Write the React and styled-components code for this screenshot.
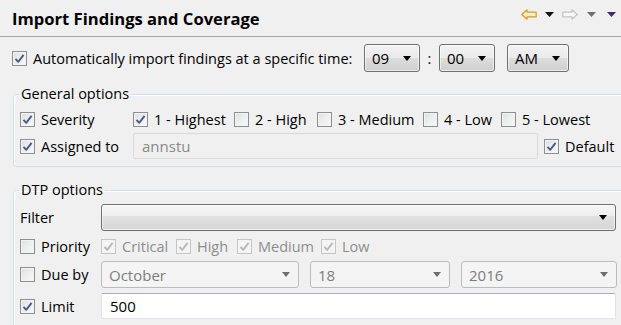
import React from "react";
import styled, { createGlobalStyle } from "styled-components";

const Global = createGlobalStyle`
  html, body { margin: 0; padding: 0; background: #f0f0f0; }
  body { font-family: "Open Sans", "Noto Sans", sans-serif; }
`;

const Root = styled.div`
  width: 621px;
  height: 325px;
  overflow: hidden;
  background: #f0f0f0;
  font-family: "Open Sans", "Noto Sans", sans-serif;
  font-size: 14.5px;
  color: #000;
`;

const Header = styled.header`
  display: flex;
  align-items: center;
  height: 36px;
  padding: 0 3px 0 12px;
  border-bottom: 1px solid #a3a3a3;
`;

const Title = styled.h1`
  flex: 1;
  margin: 0;
  font-size: 16.6px;
  font-weight: 700;
  color: #000;
`;

const NavBar = styled.div`
  display: flex;
  align-items: center;
  margin-top: -8px;
`;

const NavSlot = styled.span`
  display: inline-flex;
  align-items: center;
  justify-content: center;
  width: ${(p) => p.$w}px;
`;

const Content = styled.main`
  padding: 7px 0 0 12px;
`;

const TimeRow = styled.div`
  display: flex;
  align-items: center;
  height: 28px;
`;

const Colon = styled.span`
  width: 19px;
  text-align: center;
`;

const Gap = styled.span`
  width: ${(p) => p.$w}px;
`;

const Group = styled.fieldset`
  margin: ${(p) => p.$mt}px -10px 0 1px;
  padding: 0 5px ${(p) => p.$pb}px 6px;
  border: 1px solid #d5dfe5;
  border-radius: 3px;
  box-shadow: inset 1px 1px 0 #fff;
  min-width: 0;
`;

const Legend = styled.legend`
  padding: 0 2px;
  margin-left: -1px;
  font-size: 14.5px;
  line-height: 20px;
  color: #000;
`;

const Row = styled.div`
  display: flex;
  align-items: center;
  height: ${(p) => p.$h}px;
  margin-top: ${(p) => p.$mt || 0}px;
`;

const Cell = styled.label`
  display: inline-flex;
  align-items: center;
  gap: 6px;
  width: ${(p) => (p.$w ? `${p.$w}px` : "auto")};
  flex: ${(p) => (p.$w ? "none" : "1")};
  white-space: nowrap;
  color: ${(p) => (p.$disabled ? "#8d8d8d" : "#000")};
`;

const Box = styled.span`
  flex: none;
  width: 13px;
  height: 13px;
  border: 1px solid ${(p) => (p.$disabled ? "#c5c5c5" : "#8e8f8f")};
  background: ${(p) =>
    p.$disabled
      ? "#f4f4f4"
      : "linear-gradient(135deg, #dcdde0 0%, #eceded 45%, #f8f8f8 100%)"};
  box-shadow: inset 0 0 0 1px ${(p) => (p.$disabled ? "#f4f4f4" : "#f3f3f3")};
  display: inline-flex;
  align-items: center;
  justify-content: center;
`;

const Select = styled.div`
  box-sizing: border-box;
  display: flex;
  align-items: center;
  width: ${(p) => (p.$w ? `${p.$w}px` : "auto")};
  flex: ${(p) => (p.$w ? "none" : "1")};
  height: ${(p) => p.$h || 28}px;
  padding: 0 8px 0 7px;
  border: 1px solid ${(p) => (p.$disabled ? "#b8bcbf" : "#707070")};
  border-radius: 3px;
  background: ${(p) =>
    p.$disabled
      ? "#f4f4f4"
      : p.$light
      ? "linear-gradient(#f6f6f6 0%, #eeeeee 45%, #e1e1e1 46%, #d6d6d6 100%)"
      : "linear-gradient(#f2f2f2 0%, #ebebeb 48%, #dddddd 50%, #cfcfcf 100%)"};
  color: ${(p) => (p.$disabled ? "#7d7d7d" : "#000")};
  box-shadow: ${(p) => (p.$disabled ? "none" : "inset 0 0 0 1px rgba(255,255,255,0.6)")};
`;

const SelectText = styled.span`
  flex: 1;
  font-size: 15px;
`;

const Arrow = styled.span`
  width: 0;
  height: 0;
  border-left: 4px solid transparent;
  border-right: 4px solid transparent;
  border-top: 5px solid ${(p) => (p.$disabled ? "#6f6f6f" : "#000")};
`;

const TextBox = styled.div`
  box-sizing: border-box;
  display: flex;
  align-items: center;
  width: ${(p) => (p.$w ? `${p.$w}px` : "auto")};
  flex: ${(p) => (p.$w ? "none" : "1")};
  height: ${(p) => p.$h}px;
  padding: 0 8px;
  border: 1px solid ${(p) => (p.$disabled ? "#dadada" : "#e2e3ea")};
  border-top-color: ${(p) => (p.$disabled ? "#d8d8d8" : "#abadb3")};
  border-radius: 2px;
  background: ${(p) => (p.$disabled ? "#f0f0f0" : "#fff")};
  color: ${(p) => (p.$disabled ? "#8a8a8a" : "#000")};
  font-size: 15px;
`;

function Check({ checked, disabled }) {
  return (
    <Box $disabled={disabled}>
      {checked && (
        <svg width="11" height="11" viewBox="0 0 11 11">
          <path
            d="M1.5 5.8 L4.2 8.8 L9.6 1.8"
            fill="none"
            stroke={disabled ? "#b9b9b9" : "#4a5c8a"}
            strokeWidth="1.9"
            strokeLinejoin="round"
          />
        </svg>
      )}
    </Box>
  );
}

function CheckItem({ w, checked, disabled, children }) {
  return (
    <Cell $w={w} $disabled={disabled}>
      <Check checked={checked} disabled={disabled} />
      <span>{children}</span>
    </Cell>
  );
}

function Combo({ w, h, value, disabled, light }) {
  return (
    <Select $w={w} $h={h} $disabled={disabled} $light={light}>
      <SelectText>{value}</SelectText>
      <Arrow $disabled={disabled} />
    </Select>
  );
}

function ArrowLeftIcon() {
  return (
    <svg width="16" height="11" viewBox="0 0 16 11">
      <path
        d="M0.8 5.5 L6 0.8 L6 3.2 L15.2 3.2 L15.2 7.8 L6 7.8 L6 10.2 Z"
        fill="#fbeec5"
        stroke="#d89a1e"
        strokeWidth="1.2"
        strokeLinejoin="round"
      />
    </svg>
  );
}

function ArrowRightIcon() {
  return (
    <svg width="16" height="11" viewBox="0 0 16 11">
      <path
        d="M15.2 5.5 L10 0.8 L10 3.2 L0.8 3.2 L0.8 7.8 L10 7.8 L10 10.2 Z"
        fill="#f7f7f7"
        stroke="#c4c4c4"
        strokeWidth="1.2"
        strokeLinejoin="round"
      />
    </svg>
  );
}

function Tri({ color }) {
  return (
    <svg width="9" height="5" viewBox="0 0 9 5">
      <path d="M0 0 L9 0 L4.5 5 Z" fill={color} />
    </svg>
  );
}

export default function App() {
  return (
    <Root>
      <Global />
      <Header>
        <Title>Import Findings and Coverage</Title>
        <NavBar>
          <NavSlot $w={17}><ArrowLeftIcon /></NavSlot>
          <NavSlot $w={24}><Tri color="#111" /></NavSlot>
          <NavSlot $w={17}><ArrowRightIcon /></NavSlot>
          <NavSlot $w={26}><Tri color="#6e6e6e" /></NavSlot>
          <NavSlot $w={14}><Tri color="#3f2a78" /></NavSlot>
        </NavBar>
      </Header>
      <Content>
        <TimeRow>
          <CheckItem w={352} checked>
            Automatically import findings at a specific time:
          </CheckItem>
          <Combo w={56} value="09" />
          <Colon>:</Colon>
          <Combo w={56} value="00" />
          <Gap $w={12} />
          <Combo w={62} value="AM" />
        </TimeRow>

        <Group $mt={12} $pb={7}>
          <Legend>General options</Legend>
          <Row $h={22} $mt={4}>
            <CheckItem w={113} checked>Severity</CheckItem>
            <CheckItem w={101} checked>1 - Highest</CheckItem>
            <CheckItem w={83}>2 - High</CheckItem>
            <CheckItem w={106}>3 - Medium</CheckItem>
            <CheckItem w={78}>4 - Low</CheckItem>
            <CheckItem>5 - Lowest</CheckItem>
          </Row>
          <Row $h={26} $mt={3}>
            <CheckItem w={113} checked>Assigned to</CheckItem>
            <TextBox $w={405} $h={26} $disabled>annstu</TextBox>
            <Gap $w={6} />
            <CheckItem checked>Default</CheckItem>
          </Row>
        </Group>

        <Group $mt={13} $pb={20}>
          <Legend>DTP options</Legend>
          <Row $h={27} $mt={4}>
            <Cell $w={81}>Filter</Cell>
            <Combo w={515} h={27} value="" light />
          </Row>
          <Row $h={22} $mt={4}>
            <CheckItem w={81}>Priority</CheckItem>
            <CheckItem w={75} checked disabled>Critical</CheckItem>
            <CheckItem w={61} checked disabled>High</CheckItem>
            <CheckItem w={84} checked disabled>Medium</CheckItem>
            <CheckItem checked disabled>Low</CheckItem>
          </Row>
          <Row $h={27} $mt={4}>
            <CheckItem w={81}>Due by</CheckItem>
            <Combo w={198} h={27} value="October" disabled />
            <Gap $w={11} />
            <Combo w={140} h={27} value="18" disabled />
            <Gap $w={11} />
            <Combo w={156} h={27} value="2016" disabled />
          </Row>
          <Row $h={26} $mt={5}>
            <CheckItem w={81} checked>Limit</CheckItem>
            <TextBox $w={515} $h={26}>500</TextBox>
          </Row>
        </Group>
      </Content>
    </Root>
  );
}
